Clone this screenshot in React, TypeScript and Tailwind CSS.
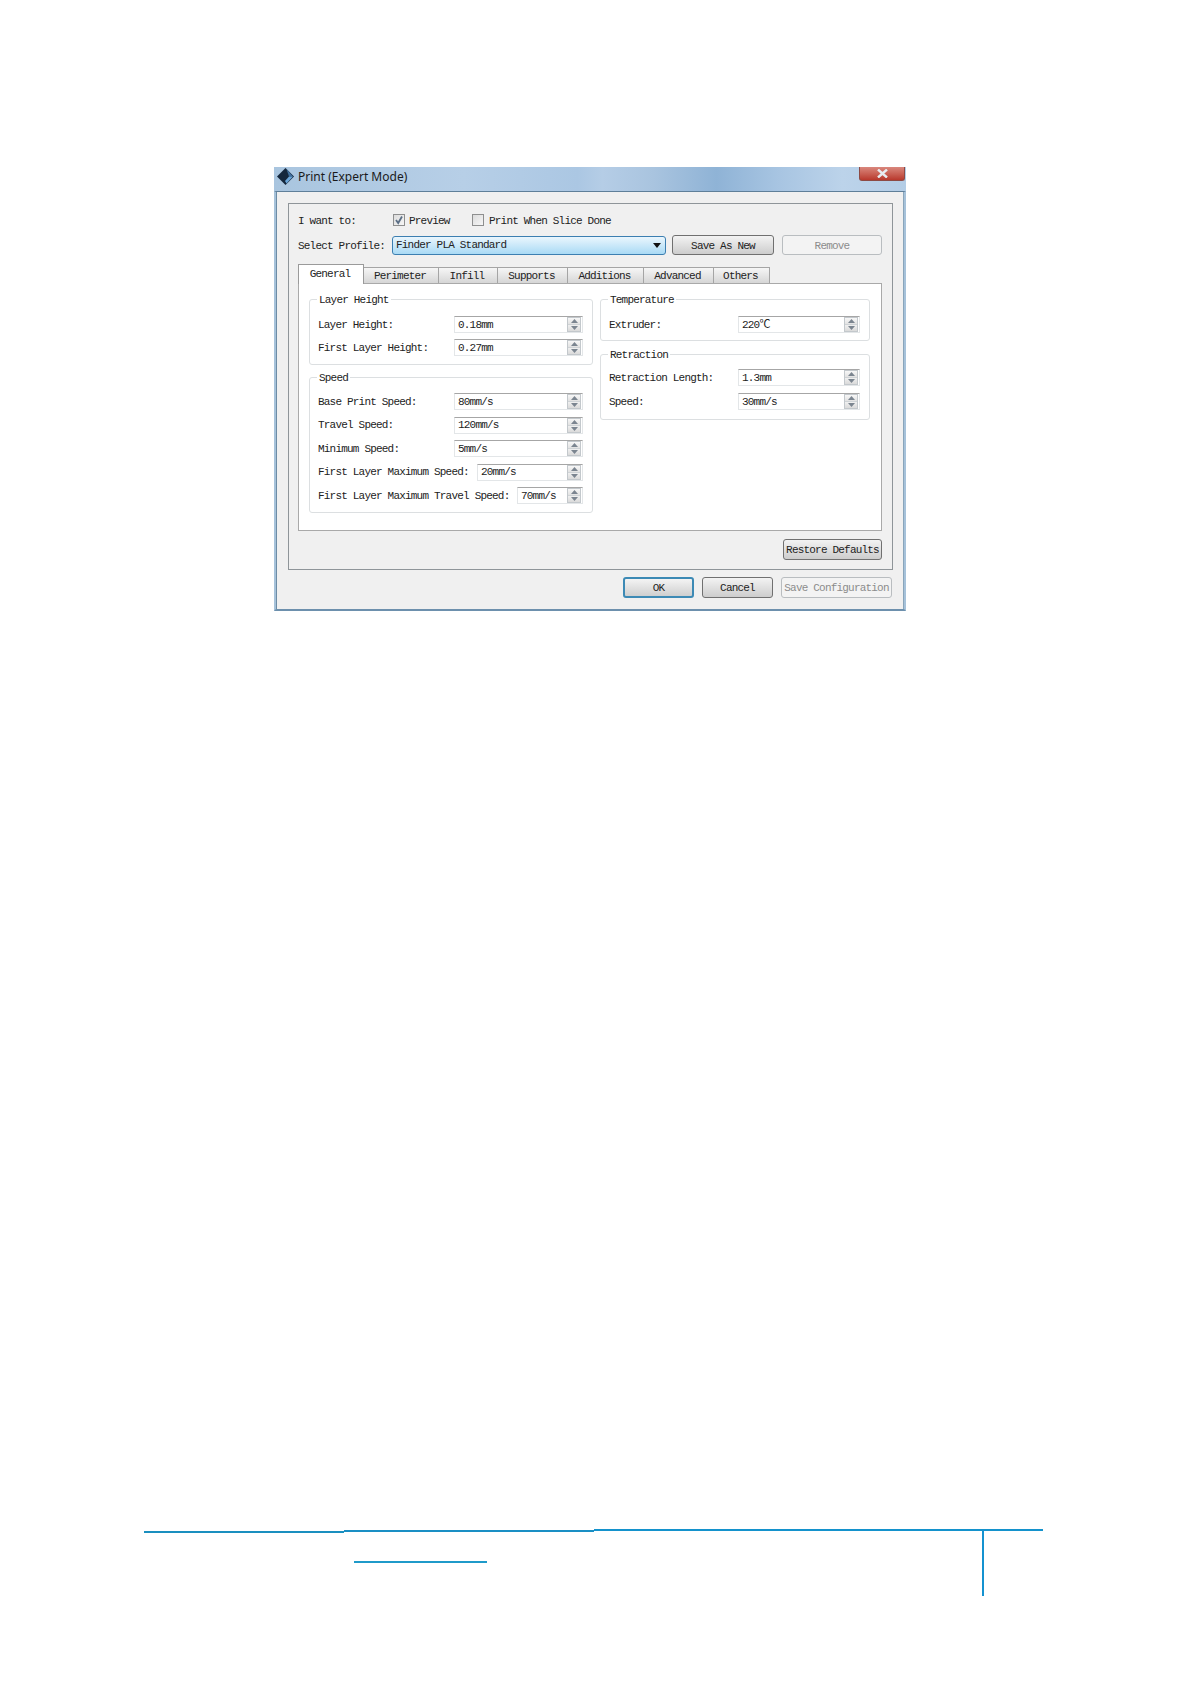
import React from "react";

const mono = "font-['Liberation_Mono','Noto_Sans_CJK_SC',monospace] text-[11px] tracking-[-0.8px] text-[#222]";

function Logo() {
  return (
    <svg width="17" height="17" viewBox="0 0 17 17" className="shrink-0">
      <polygon points="8.5,0 17,8.5 8.5,17 0,8.5" fill="#14273d" />
      <polygon points="9.5,1 16,8.5 12,8.5" fill="#3f6f9e" />
      <polygon points="12,8.5 16,8.5 9.5,15.5 8,13" fill="#6aa5d8" />
    </svg>
  );
}

function Spinner() {
  return (
    <div className="w-[14px] h-[15px] shrink-0 border border-[#c3c8cc] flex flex-col bg-white">
      <div className="flex-1 flex items-center justify-center bg-gradient-to-b from-[#f7f7f7] to-[#e2e2e2] border-b border-[#cfd3d6]">
        <svg width="7" height="4" viewBox="0 0 7 4"><polygon points="3.5,0 7,4 0,4" fill="#7b8590" /></svg>
      </div>
      <div className="flex-1 flex items-center justify-center bg-gradient-to-b from-[#f0f0f0] to-[#dadada]">
        <svg width="7" height="4" viewBox="0 0 7 4"><polygon points="0,0 7,0 3.5,4" fill="#7b8590" /></svg>
      </div>
    </div>
  );
}

function Field({ label, value, w }: { label: string; value: string; w: string }) {
  return (
    <div className="flex items-center justify-between h-[17px]">
      <span className="whitespace-pre pt-px">{label}</span>
      <div className={`${w} h-[17px] flex items-center justify-between bg-white border border-[#e3e6e8] border-t-[#a6a6a6] pl-[3px] pr-px`}>
        <span className="whitespace-pre pt-px">{value}</span>
        <Spinner />
      </div>
    </div>
  );
}

function Box({ title, h, gap, pt, children }: { title: string; h: string; gap: string; pt?: string; children: React.ReactNode }) {
  return (
    <div className={`relative ${h} border border-[#dcdfe1] rounded-[3px] ${pt ?? "pt-[16px]"} pl-[8px] pr-[9px] flex flex-col ${gap}`}>
      <span className="absolute left-[7px] -top-[6px] bg-white px-[2px] leading-[13px]">{title}</span>
      {children}
    </div>
  );
}

function Btn({ w, h, children, kind, pt }: { w: string; h: string; children: React.ReactNode; kind?: "def" | "off"; pt?: string }) {
  const cls =
    kind === "off"
      ? "border-[#b9bdc0] bg-[#f3f3f3] text-[#8c8c8c]"
      : kind === "def"
      ? "border-[#3d8ab5] border-2 bg-gradient-to-b from-[#f4f4f4] to-[#cfcfcf]"
      : "border-[#707070] bg-gradient-to-b from-[#f3f3f3] to-[#cdcdcd]";
  return <div className={`${w} ${h} ${pt ?? "pt-px"} shrink-0 border rounded-[3px] flex items-center justify-center whitespace-pre ${cls}`}>{children}</div>;
}

function Tab({ w, children, active }: { w: string; children: React.ReactNode; active?: boolean }) {
  return active ? (
    <div className={`${w} h-[20px] relative z-10 -mb-px bg-white border border-b-0 border-[#9a9a9a] flex items-center justify-center pr-[2px]`}>{children}</div>
  ) : (
    <div className={`${w} h-[16px] border border-b-0 border-l-0 border-[#a5a5a5] bg-gradient-to-b from-[#f6f6f6] to-[#d6d6d6] flex items-center justify-center pt-px pr-[2px]`}>{children}</div>
  );
}

function Check({ on }: { on?: boolean }) {
  return (
    <div className="w-[12px] h-[12px] border border-[#8e8f8f] bg-gradient-to-br from-[#dcdcdc] to-[#f6f6f6] flex items-center justify-center">
      {on && (
        <svg width="10" height="10" viewBox="0 0 10 10"><path d="M2 5 L4.2 8 L8 1.5" fill="none" stroke="#5b6f86" strokeWidth="1.8" /></svg>
      )}
    </div>
  );
}

export default function App() {
  return (
    <div className="w-[1191px] h-[1684px] bg-white overflow-hidden flex flex-col">
      {/* dialog */}
      <div className={`ml-[274px] mt-[167px] w-[632px] h-[444px] flex flex-col shrink-0 ${mono}`}>
        <div className="relative h-[24px] shrink-0 bg-[linear-gradient(90deg,#a9c5df_0%,#b7cfe7_30%,#abc7e3_48%,#b5cde6_52%,#a9c4df_60%,#8fb3d6_70%,#a8c5e2_80%,#bcd3ea_90%,#b3cde6_100%)] flex items-start pl-[3px] pt-px gap-[4px]">
          <Logo />
          <span className="font-['Noto_Sans',sans-serif] text-[12px] leading-[18px] tracking-normal text-[#1a1a1a]">Print (Expert Mode)</span>
          <div className="absolute right-[1px] top-0 w-[46px] h-[14px] rounded-b-[3px] border border-t-0 border-[#8d4a44] bg-gradient-to-b from-[#d9877d] to-[#b8372c] flex items-center justify-center">
            <svg width="13" height="9" viewBox="0 0 13 9"><path d="M2 0.5 L11 8.5 M11 0.5 L2 8.5" stroke="#e8edf2" strokeWidth="2.4" /></svg>
          </div>
        </div>

        <div className="flex-1 bg-[#f0f0f0] border-2 border-t border-[#a6c2da] border-t-[#5f7f99] border-b-[#6d90ad] shadow-[inset_1px_0_0_#6d8ca5,inset_-1px_0_0_#8aa5ba] pl-[12px] pt-[11px]">
          <div className="w-[605px] h-[367px] border border-[#8f9599] pt-[10px] pl-[9px] pr-[11px]">
            <div className="flex items-center h-[12px]">
              <span className="w-[95px] pt-[2px]">I want to:</span>
              <Check on />
              <span className="ml-[4px] w-[63px] pt-[2px]">Preview</span>
              <Check />
              <span className="ml-[5px] pt-[2px]">Print When Slice Done</span>
            </div>

            <div className="flex items-center h-[20px] mt-[9px]">
              <span className="w-[94px] pt-[2px]">Select Profile:</span>
              <div className="w-[274px] h-[19px] border border-[#3c7fb1] rounded-[3px] bg-gradient-to-b from-[#eaf6fd] to-[#a9daf5] flex items-center justify-between pl-[3px] pr-[4px]">
                <span>Finder PLA Standard</span>
                <svg width="8" height="5" viewBox="0 0 8 5"><polygon points="0,0 8,0 4,5" fill="#111" /></svg>
              </div>
              <div className="ml-[6px]"><Btn w="w-[102px]" h="h-[20px]" pt="pt-[3px]">Save As New</Btn></div>
              <div className="ml-[8px] -mr-px"><Btn w="w-[100px]" h="h-[20px]" kind="off" pt="pt-[3px]">Remove</Btn></div>
            </div>

            <div className="flex items-end h-[19px] mt-[9px]">
              <Tab w="w-[66px]" active>General</Tab>
              <Tab w="w-[75px]">Perimeter</Tab>
              <Tab w="w-[59px]">Infill</Tab>
              <Tab w="w-[70px]">Supports</Tab>
              <Tab w="w-[76px]">Additions</Tab>
              <Tab w="w-[70px]">Advanced</Tab>
              <Tab w="w-[56px]">Others</Tab>
            </div>

            <div className="w-[584px] h-[248px] bg-white border border-[#a9a9a9] pt-[15px] pl-[10px] flex gap-[7px]">
              <div className="w-[284px] flex flex-col gap-[12px]">
                <Box title="Layer Height" h="h-[66px]" gap="gap-[6px]">
                  <Field label="Layer Height:" value="0.18mm" w="w-[129px]" />
                  <Field label="First Layer Height:" value="0.27mm" w="w-[129px]" />
                </Box>
                <Box title="Speed" h="h-[136px]" gap="gap-[6.5px]" pt="pt-[15px]">
                  <Field label="Base Print Speed:" value="80mm/s" w="w-[129px]" />
                  <Field label="Travel Speed:" value="120mm/s" w="w-[129px]" />
                  <Field label="Minimum Speed:" value="5mm/s" w="w-[129px]" />
                  <Field label="First Layer Maximum Speed:" value="20mm/s" w="w-[106px]" />
                  <Field label="First Layer Maximum Travel Speed:" value="70mm/s" w="w-[66px]" />
                </Box>
              </div>
              <div className="w-[270px] flex flex-col gap-[13px]">
                <Box title="Temperature" h="h-[42px]" gap="gap-[5px]">
                  <Field label="Extruder:" value="220℃" w="w-[122px]" />
                </Box>
                <Box title="Retraction" h="h-[66px]" gap="gap-[7px]" pt="pt-[14px]">
                  <Field label="Retraction Length:" value="1.3mm" w="w-[122px]" />
                  <Field label="Speed:" value="30mm/s" w="w-[122px]" />
                </Box>
              </div>
            </div>

            <div className="flex justify-end mt-[8px] -mr-px">
              <Btn w="w-[99px]" h="h-[21px]">Restore Defaults</Btn>
            </div>
          </div>

          <div className="w-[605px] flex justify-end gap-[8px] mt-[7px] pr-px">
            <Btn w="w-[71px]" h="h-[21px]" kind="def">OK</Btn>
            <Btn w="w-[71px]" h="h-[21px]">Cancel</Btn>
            <Btn w="w-[111px]" h="h-[21px]" kind="off">Save Configuration</Btn>
          </div>
        </div>
      </div>

      {/* page footer rules */}
      <div className="ml-[144px] w-[899px] mt-[918px] shrink-0">
        <div className="flex items-start h-[5px]">
          <div className="w-[200px] h-[2px] mt-[2px] bg-[#1a8fbf]" />
          <div className="w-[250px] h-[2px] mt-[1px] bg-[#1a8fc4]" />
          <div className="w-[449px] h-[2px] bg-[#1492cc]" />
        </div>
        <div className="flex items-start h-[62px]">
          <div className="w-[210px] shrink-0" />
          <div className="w-[133px] h-[2px] mt-[27px] bg-[#1f9ac9] shrink-0" />
          <div className="w-[495px] shrink-0" />
          <div className="w-[2px] h-[66px] -mt-[4px] bg-[#1492d0] shrink-0" />
        </div>
      </div>
    </div>
  );
}
